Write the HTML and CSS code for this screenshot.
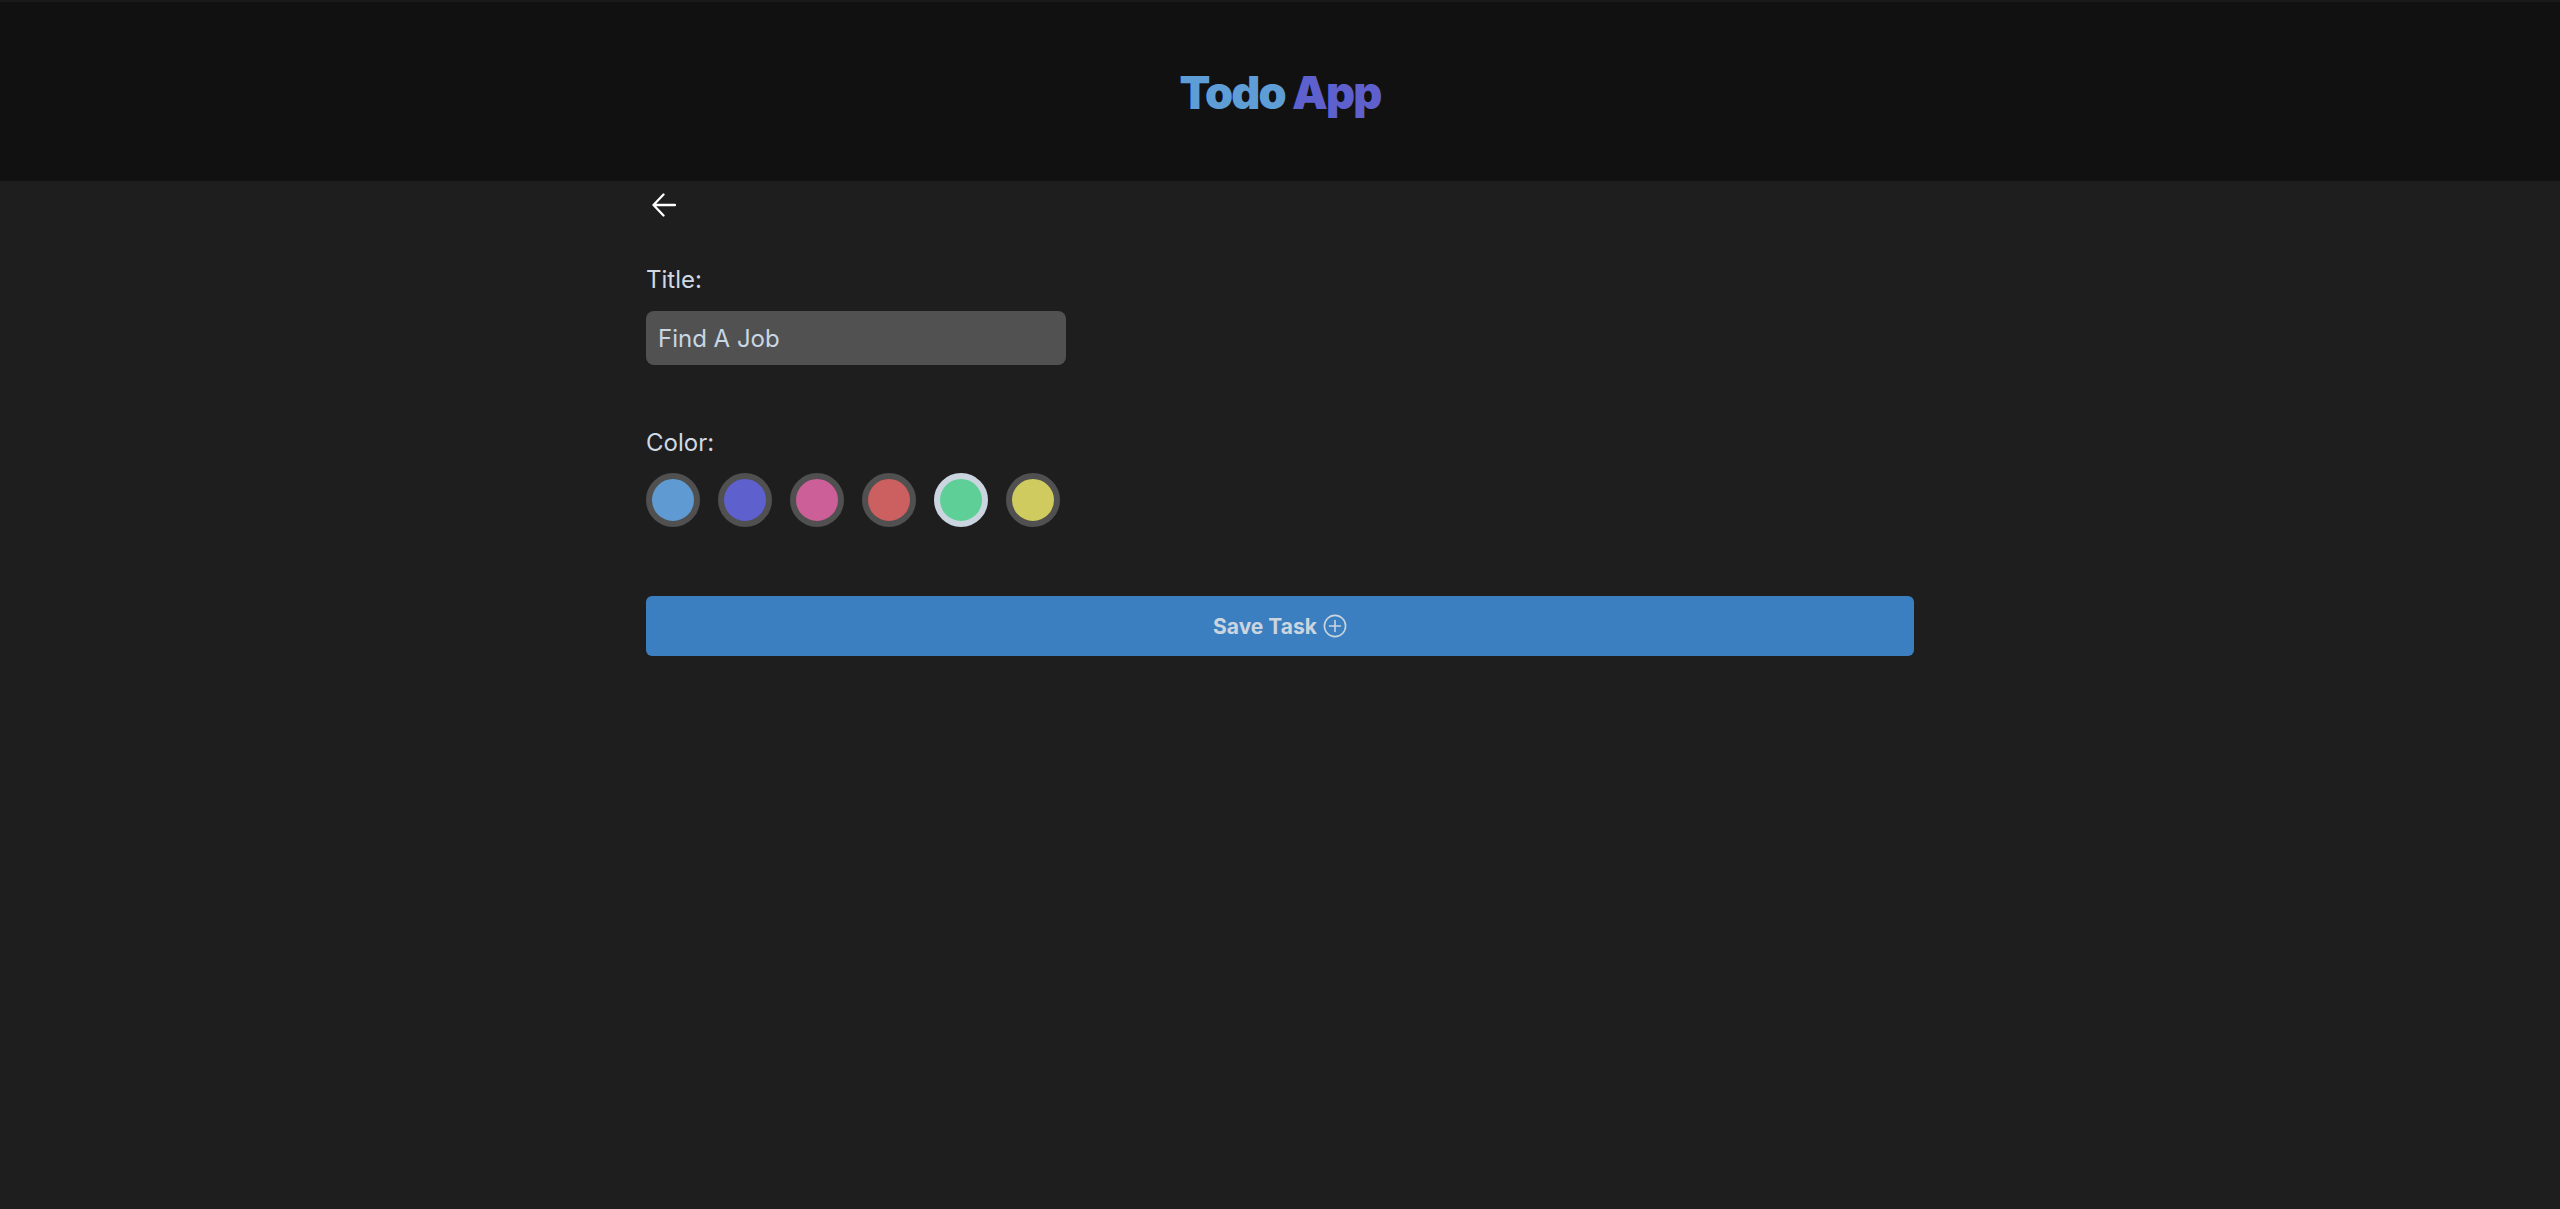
FILE: index.html
```html
<!DOCTYPE html>
<html lang="en">
<head>
<meta charset="utf-8">
<title>Todo App</title>
<link rel="stylesheet" href="styles.css">
</head>
<body>
<header class="topbar">
  <h1 class="logo"><span class="logo-todo">Todo</span> <span class="logo-app">App</span></h1>
</header>
<main class="page">
  <button class="back" type="button" aria-label="Back">
    <svg width="24" height="24" viewBox="0 0 24 24" fill="none" stroke="#ffffff" stroke-width="2.3" stroke-linecap="round" stroke-linejoin="round"><path d="M23 12H1.5M11.5 1.5 1.5 12l10 10.5"/></svg>
  </button>
  <label class="field-label label-title" for="title">Title:</label>
  <input class="text-input" id="title" type="text" value="Find A Job">
  <div class="field-label label-color">Color:</div>
  <div class="swatches">
    <span class="swatch sw-blue"></span>
    <span class="swatch sw-indigo"></span>
    <span class="swatch sw-pink"></span>
    <span class="swatch sw-red"></span>
    <span class="swatch sw-green selected"></span>
    <span class="swatch sw-yellow"></span>
  </div>
  <button class="save" type="button">Save Task
    <svg width="24" height="24" viewBox="0 0 24 24" fill="none" stroke="currentColor" stroke-width="1.6" stroke-linecap="round"><circle cx="12" cy="12" r="10.6"/><path d="M12 6.5v11M6.5 12h11"/></svg>
  </button>
</main>
</body>
</html>
```

FILE: styles.css
```css
* { box-sizing: border-box; }
html, body { margin: 0; padding: 0; }
body {
  background: #1e1e1e;
  font-family: Inter, "Noto Sans", sans-serif;
  color: #cfd9e4;
  min-height: 1209px;
}
.topbar {
  height: 181px;
  background: #111111;
  border-top: 2px solid #1a1a1a;
  display: flex;
  align-items: center;
  justify-content: center;
}
.logo {
  margin: 0;
  font-size: 45px;
  font-weight: 900;
  letter-spacing: -1.8px;
  line-height: 1;
  padding-top: 2px;
}
.logo-todo { color: #5e9dd6; }
.logo-app { color: #5e60ce; }
.page {
  width: 1268px;
  margin: 0 auto;
  display: flex;
  flex-direction: column;
  align-items: flex-start;
}
.back {
  margin-top: 6px;
  width: 36px;
  height: 36px;
  padding: 6px;
  border: 0;
  background: transparent;
  display: flex;
  cursor: pointer;
}
.field-label {
  font-size: 24px;
  line-height: normal;
  color: #cfd9e4;
}
.label-title { margin-top: 42px; }
.text-input {
  margin-top: 17px;
  width: 420px;
  height: 54px;
  border: 0;
  border-radius: 8px;
  background: #515151;
  color: #c9d6e3;
  font-family: Inter, "Noto Sans", sans-serif;
  font-size: 24px;
  padding: 0 12px;
  outline: none;
}
.label-color { margin-top: 63px; }
.swatches {
  margin-top: 16px;
  display: flex;
  gap: 18px;
}
.swatch {
  width: 54px;
  height: 54px;
  border-radius: 50%;
  border: 6px solid #505050;
}
.swatch.selected { border-color: #cbd5df; }
.sw-blue { background: #5f9bd2; }
.sw-indigo { background: #5e60ce; }
.sw-pink { background: #cc5f98; }
.sw-red { background: #cc5f5f; }
.sw-green { background: #5ecf96; }
.sw-yellow { background: #cfcb5f; }
.save {
  margin-top: 69px;
  width: 100%;
  height: 60px;
  border: 0;
  border-radius: 6px;
  background: #3b7fc1;
  color: #cbd5df;
  font-family: Inter, "Noto Sans", sans-serif;
  font-size: 21px;
  font-weight: 700;
  display: flex;
  align-items: center;
  justify-content: center;
  gap: 6px;
  cursor: pointer;
}
```
